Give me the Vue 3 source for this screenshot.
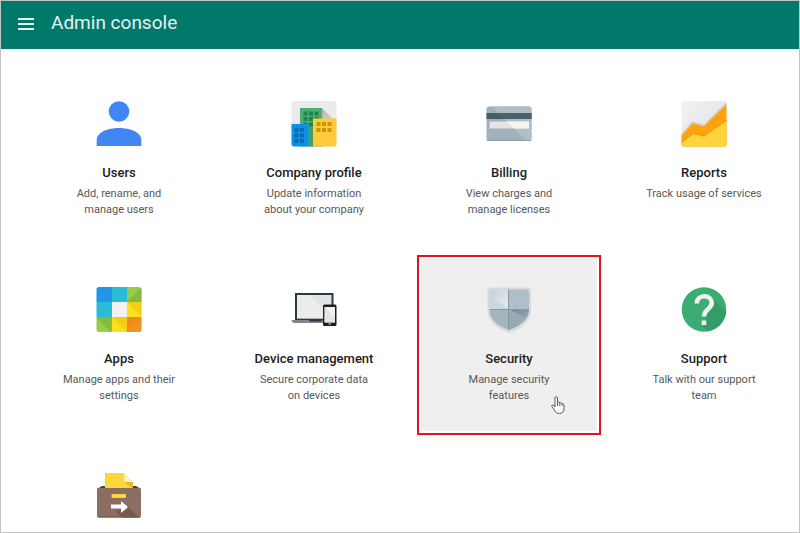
<script setup>
const tiles = [
  { id: 'users', title: 'Users', lines: ['Add, rename, and', 'manage users'] },
  { id: 'company', title: 'Company profile', lines: ['Update information', 'about your company'] },
  { id: 'billing', title: 'Billing', lines: ['View charges and', 'manage licenses'] },
  { id: 'reports', title: 'Reports', lines: ['Track usage of services'] },
  { id: 'apps', title: 'Apps', lines: ['Manage apps and their', 'settings'] },
  { id: 'devices', title: 'Device management', lines: ['Secure corporate data', 'on devices'] },
  { id: 'security', title: 'Security', lines: ['Manage security', 'features'], active: true },
  { id: 'support', title: 'Support', lines: ['Talk with our support', 'team'] },
  { id: 'migration' },
]
</script>

<template>
  <div class="console">
    <header class="bar">
      <button class="menu" type="button" aria-label="Menu">
        <svg width="16" height="12" viewBox="0 0 16 12">
          <path d="M0 1h16M0 6h16M0 11h16" stroke="#e6f3f0" stroke-width="2" />
        </svg>
      </button>
      <h1>Admin console</h1>
    </header>

    <main class="grid">
      <a v-for="t in tiles" :key="t.id" class="tile" :class="{ active: t.active }" :href="'#' + t.id">
        <svg v-if="t.id === 'users'" class="icon" viewBox="0 0 46 46">
          <g fill="#4285f4">
            <circle cx="23" cy="10.5" r="10.3" />
            <path d="M.7 45V39C.7 31 12 27 23 27s22.300 4 22.300 12v6z" />
          </g>
        </svg>

        <svg v-else-if="t.id === 'company'" class="icon" viewBox="0 0 46 46">
          <defs>
            <linearGradient id="company-shade" x1="0" y1="0" x2="1" y2="1">
              <stop offset="0" stop-color="#b5b5b5" />
              <stop offset="1" stop-color="#e8e8e8" />
            </linearGradient>
          </defs>
          <rect x=".5" width="45" height="45.500" rx="2.500" fill="#ebebeb" />
          <path d="M31 7l14.500 14V32H31z" fill="url(#company-shade)" />
          <path d="M9 7h22v38.500H9z" fill="#4caf70" />
          <path d="M17.500 24l4.500 4v17.500h-4.500z" fill="#43a062" />
          <path d="M12.500 10.500h4v4h-4zm5.500 0h4v4h-4zm5.500 0h4v4h-4zm-11 5.500h4v4h-4zm5.500 0h4v4h-4zm5.500 0h4v4h-4zm-11 5.500h4v2h-4zm5.500 0h4v4h-4z" fill="#188552" />
          <path d="M.5 23h17v22.500H3a2.500 2.500 0 0 1-2.500-2.500z" fill="#0d91e8" />
          <path d="M3.500 27h4v4h-4zm5.500 0h4v4H9zm-5.500 5.500h4v4h-4zm5.500 0h4v4H9zM3.500 38h4v4h-4zM9 38h4v4H9z" fill="#0769b0" />
          <path d="M22 17.500h23.500V43a2.500 2.500 0 0 1-2.500 2.500H22z" fill="#fdcb3d" />
          <path d="M25.500 21h4v4h-4zm5.500 0h4v4h-4zm5.500 0h4v4h-4zm-11 6h4v4h-4zm5.500 0h4v4h-4zm5.500 0h4v4h-4z" fill="#cf9500" />
        </svg>

        <svg v-else-if="t.id === 'billing'" class="icon" viewBox="0 0 46 46">
          <rect x=".5" y="5.500" width="45" height="34.500" rx="2.500" fill="#9fb1ba" />
          <path d="M6 5.500h37a2.500 2.500 0 0 1 2.500 2.500v29.500A2.500 2.500 0 0 1 43 40h-2.500z" fill="#b0bfc6" />
          <path d="M.5 12h45v6H.5z" fill="#455b66" />
          <path d="M6 12h39.500v6H18z" fill="#4f6671" opacity=".6" />
          <path d="M3.500 20.500h39.500v7H3.500z" fill="#e2e4e5" />
          <path d="M20.500 20.500H43v7H28z" fill="#f4f4f4" />
          <path d="M1 39.500h44" stroke="#8d9fa8" />
        </svg>

        <svg v-else-if="t.id === 'reports'" class="icon" viewBox="0 0 46 46">
          <defs>
            <linearGradient id="report-bg" x1="0" y1="0" x2="1" y2="1">
              <stop offset="0" stop-color="#f3f3f3" />
              <stop offset="1" stop-color="#dedede" />
            </linearGradient>
            <clipPath id="report-clip"><rect x=".5" width="45" height="45.500" rx="2.500" /></clipPath>
          </defs>
          <g clip-path="url(#report-clip)">
            <path d="M0 0h46v46H0z" fill="url(#report-bg)" />
            <path d="M0 35l11.500-13.500L23 25 46 2" fill="none" stroke="#ccc" stroke-width="2" />
            <path d="M0 35.500L11.500 22.500 23 25.500 46 3v43H0z" fill="#ffa20e" />
            <path d="M0 42l12-9.500L23 35 46 19v27H0z" fill="#fdd43b" />
            <path d="M0 42l12-9.500L23 35 46 19" fill="none" stroke="#e99810" />
          </g>
        </svg>

        <svg v-else-if="t.id === 'apps'" class="icon" viewBox="0 0 46 46">
          <defs>
            <clipPath id="apps-clip"><rect x=".5" width="45" height="45" rx="2.500" /></clipPath>
          </defs>
          <g clip-path="url(#apps-clip)">
            <path d="M0 0h16v15H0z" fill="#2196e8" />
            <path d="M16 0h15v15H16zM0 15h16v15H0z" fill="#29bcd4" />
            <path d="M31 0h15v15H31zM0 30h16v16H0z" fill="#97cb4c" />
            <path d="M16 15h15v15H16z" fill="#f1f1f1" />
            <path d="M31 15h15v15H31zM16 30h15v16H16z" fill="#fbe11c" />
            <path d="M31 30h15v16H31z" fill="#f28c18" />
            <path d="M31 15L46 0v15zM0 30l15 15.500L16 30z" fill="#7db43c" opacity=".75" />
            <path d="M31 15l15 15V15zM16 30l15 15.500V30z" fill="#f0cb14" opacity=".8" />
            <path d="M31 45L46 30v16z" fill="#f59b22" opacity=".4" />
          </g>
        </svg>

        <svg v-else-if="t.id === 'devices'" class="icon" viewBox="0 0 46 46">
          <path d="M4 6h38.500v27H4z" fill="#263b44" />
          <path d="M6 8h34.500v23.500H6z" fill="#e2e2e2" />
          <path d="M6 8h13l21.500 22v1.500H6z" fill="#efefef" opacity=".75" />
          <path d="M.5 33h34v3H3a3 3 0 0 1-2.500-3z" fill="#858585" />
          <path d="M18 33h13l-1 1.500H19z" fill="#263b44" />
          <rect x="32" y="17.500" width="13.500" height="21.500" rx="1.500" fill="#1d1d1f" />
          <path d="M33.500 20h10.500v15.500H33.500z" fill="#f2f2f2" />
          <path d="M34 20l10 11v4.500h-10.500V20z" fill="#dedede" opacity=".7" />
          <path d="M37.500 37h2.500" stroke="#eee" />
        </svg>

        <svg v-else-if="t.id === 'security'" class="icon" viewBox="0 0 46 46">
          <defs>
            <linearGradient id="shield-light" x1="0" y1="0" x2="1" y2="1">
              <stop offset="0" stop-color="#c1ced4" />
              <stop offset="1" stop-color="#eaf0f3" />
            </linearGradient>
            <linearGradient id="shield-dark" x1="0" y1="0" x2="1" y2="1">
              <stop offset="0" stop-color="#6f8591" />
              <stop offset="1" stop-color="#9caeb8" />
            </linearGradient>
            <clipPath id="shield-clip"><path d="M6 2.500h34a3 3 0 0 1 3 3V22c0 10-8 17-20 21C11 39 3.500 32 3.500 22V5.500A3 3 0 0 1 6 2.500z" /></clipPath>
          </defs>
          <path d="M4 .5h38.500A2.500 2.500 0 0 1 45 3v20c0 12-10 19-22 23C11 42 1.500 35 1.500 23V3A2.500 2.500 0 0 1 4 .5z" fill="#dadada" />
          <g clip-path="url(#shield-clip)">
            <path d="M3 2h20v20H3z" fill="#cbd7dc" />
            <path d="M4 2h19v20L3 9z" fill="url(#shield-light)" />
            <path d="M23 2h21v20H23z" fill="#afbfc7" />
            <path d="M3 22h20v23H3z" fill="#a3b5be" />
            <path d="M23 22h21v23H23z" fill="#98abb5" />
            <path d="M23 22h21v11z" fill="url(#shield-dark)" />
            <path d="M3 22.500h41M22.500 2v42" stroke="#8599a3" />
          </g>
        </svg>

        <svg v-else-if="t.id === 'support'" class="icon" viewBox="0 0 46 46">
          <defs>
            <clipPath id="support-clip"><circle cx="23" cy="22.500" r="22.300" /></clipPath>
          </defs>
          <g clip-path="url(#support-clip)">
            <path d="M0 0h46v46H0z" fill="#3bac72" />
            <path d="M30 10l16 16v20H28l-7-7 4-1v-8l5-9z" fill="#349c65" />
          </g>
          <path d="M15.800 16.500c0-4.500 3.200-7.300 7.500-7.300s7.500 2.800 7.500 6.800c0 5.500-7.800 6.500-7.800 13.500" fill="none" stroke="#f1f1f1" stroke-width="4.600" />
          <path d="M20.700 33.500h4.600V38h-4.600z" fill="#f1f1f1" />
        </svg>

        <svg v-else class="icon" viewBox="0 0 46 46">
          <path d="M1 16l5-3h34l5 3v3H1z" fill="#513c36" />
          <path d="M9 0h19l9 9v9H9z" fill="#fdd63b" />
          <path d="M28 9h9v7z" fill="#e8bb2e" />
          <path d="M28 0l9 9h-9z" fill="#fff2ad" />
          <rect x="1" y="15" width="44" height="29.500" rx="2" fill="#8c6d63" />
          <path d="M32 34l11 10.500H26l-7-7h12z" fill="#79594f" />
          <path d="M1.500 44h43" stroke="#75564d" />
          <rect x="15.500" y="21" width="14.500" height="4" rx="1" fill="#fdd63b" />
          <path d="M15 31.500h10V28l7 6-7 6v-4.500H15z" fill="#fff" />
        </svg>

        <h2 v-if="t.title">{{ t.title }}</h2>
        <p v-if="t.lines">
          <span v-for="line in t.lines" :key="line">{{ line }}</span>
        </p>

        <svg v-if="t.active" class="pointer" width="14" height="18" viewBox="0 0 14 18">
          <path d="M4 11V2c0-1.800 2.500-1.800 2.500 0v4.500c.8-.8 2-.5 2.300.5.800-.6 1.900-.2 2.100.7 1-.5 2.100.1 2.100 1.300v4c0 2.500-1.500 4.500-4.500 4.500-2.500 0-3.500-1-4.500-2.500L1 10.500c-.8-1.400.9-2.300 1.900-1.100z" fill="#fff" stroke="#55566a" />
          <path d="M6.500 6.500V10M8.800 7v3M11 7.500V10" stroke="#55566a" />
        </svg>
      </a>
    </main>
  </div>
</template>

<style>
body {
  margin: 0;
}
</style>

<style scoped>
.console {
  box-sizing: border-box;
  height: 100vh;
  overflow: hidden;
  border: 1px solid #c3c3c3;
  background: #fff;
  font-family: Roboto, "Liberation Sans", sans-serif;
}
.bar {
  box-sizing: border-box;
  display: flex;
  align-items: center;
  gap: 17px;
  height: 48px;
  padding: 0 17px 2px;
  background: #00796b;
}
.menu {
  display: flex;
  padding: 0;
  border: 0;
  background: none;
}
h1 {
  margin: 0;
  padding-bottom: 2px;
  color: #e6f3f0;
  font-size: 19px;
  font-weight: 400;
  line-height: 24px;
}
.grid {
  display: grid;
  grid-template-columns: repeat(4, 1fr);
  gap: 14px 19px;
  padding: 24px 7px 14px 30px;
}
.tile {
  position: relative;
  box-sizing: border-box;
  display: flex;
  flex-direction: column;
  align-items: center;
  padding: 28px 0 27px;
  color: #212121;
  text-align: center;
  text-decoration: none;
}
.active {
  background: #efefef;
  outline: 2px solid #e8101c;
  outline-offset: 2px;
}
.icon {
  width: 46px;
  height: 46px;
}
h2 {
  margin: 17px 0 4px;
  font-size: 13px;
  font-weight: 500;
  line-height: 18px;
}
p {
  margin: 0;
  color: #575757;
  font-size: 11px;
  line-height: 16px;
}
p span {
  display: block;
}
.pointer {
  position: absolute;
  right: 32px;
  bottom: 17px;
}
</style>
